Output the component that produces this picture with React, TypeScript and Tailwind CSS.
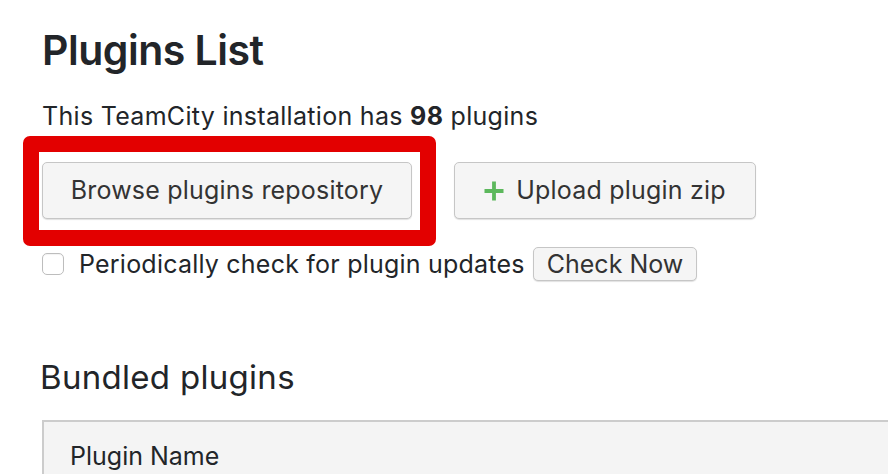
import React from 'react';

export default function App() {
  return (
    <div className="min-h-[474px] overflow-hidden bg-white pl-[42px] pt-[22px] text-[#222529] font-['Inter',sans-serif]">
      <h1 className="text-[41px] font-semibold leading-[56px] tracking-[-0.5px]">Plugins List</h1>

      <p className="mt-[23px] text-[25px] leading-[30px] tracking-[0.3px]">
        This TeamCity installation has <b className="font-bold">98</b> plugins
      </p>

      <div className="mt-[31px] flex items-center gap-[42px]">
        <div className="relative">
          {/* annotation frame */}
          <span className="pointer-events-none absolute -left-[19px] -right-[24px] -top-[26px] -bottom-[27px] rounded-[7px] border-[16px] border-[#e30000]" />
          <button className="h-[57px] w-[370px] rounded-[5px] border border-[#c6c6c6] bg-[#f5f5f5] text-[25px] tracking-[0.2px] text-[#333] shadow-[0_1px_1px_rgba(0,0,0,0.12)]">
            Browse plugins repository
          </button>
        </div>
        <button className="flex h-[57px] w-[302px] items-center justify-center gap-[12px] rounded-[5px] border border-[#c6c6c6] bg-[#f5f5f5] text-[25px] tracking-[0.2px] text-[#333] shadow-[0_1px_1px_rgba(0,0,0,0.12)]">
          <svg width="20" height="20" viewBox="0 0 20 20">
            <path d="M10 0.5v19M0.5 10h19" stroke="#5cb85c" strokeWidth="3.8" />
          </svg>
          Upload plugin zip
        </button>
      </div>

      <div className="mt-[28px] flex items-center">
        <span className="h-[22px] w-[22px] rounded-[5px] border border-[#bdbdbd] bg-white shadow-[inset_0_1px_1px_rgba(0,0,0,0.05)]" />
        <span className="ml-[15px] text-[25px] leading-[30px] tracking-[0.22px]">Periodically check for plugin updates</span>
        <button className="ml-[8px] h-[34px] rounded-[5px] border border-[#c6c6c6] bg-[#f5f5f5] px-[13px] text-[25px] leading-[30px] text-[#333] shadow-[0_1px_1px_rgba(0,0,0,0.12)]">
          Check Now
        </button>
      </div>

      <h2 className="-ml-[2px] mt-[74px] text-[33px] leading-[44px] tracking-[0.3px]">Bundled plugins</h2>

      <div className="mt-[21px] border-l-2 border-t-2 border-[#cccccc] bg-[#f4f4f4] pb-[20px] pl-[26px] pt-[19px]">
        <span className="text-[25px] leading-[30px]">Plugin Name</span>
      </div>
    </div>
  );
}
